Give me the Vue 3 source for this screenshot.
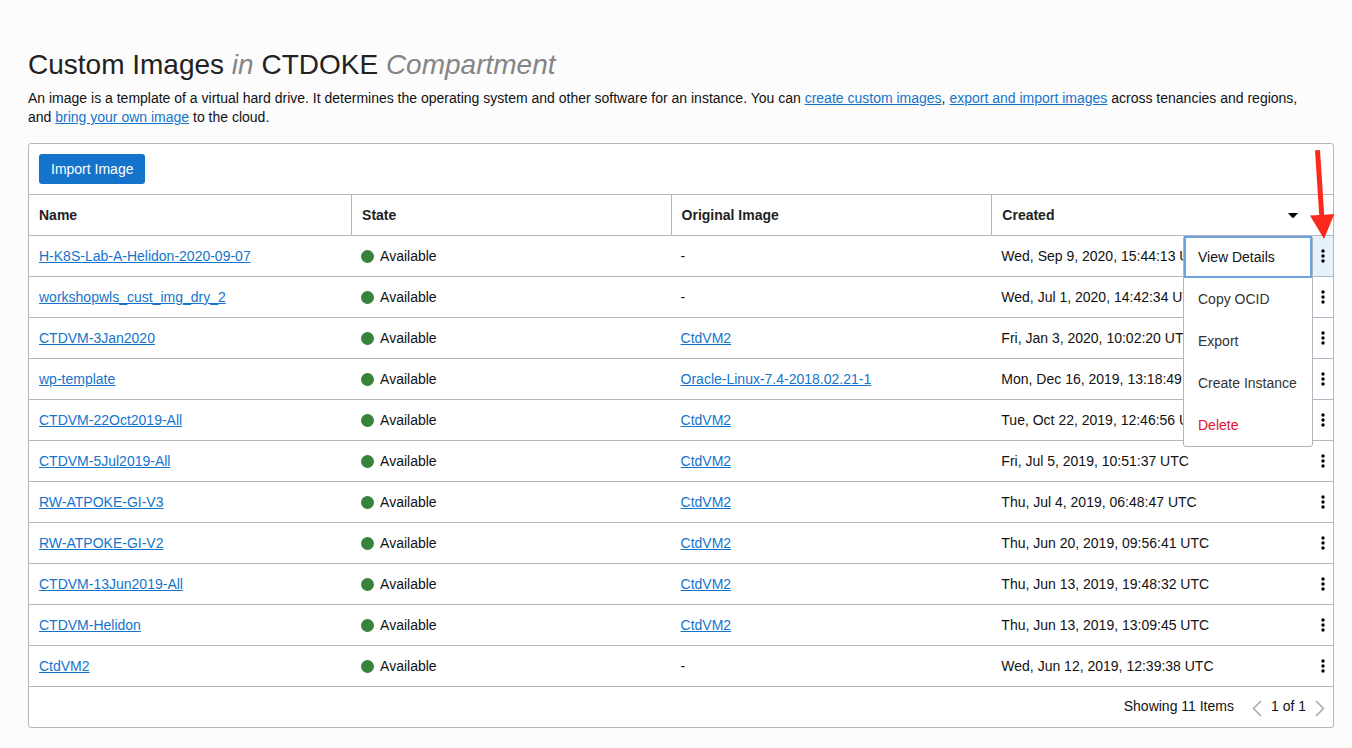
<script setup>
const images = [
  { name: 'H-K8S-Lab-A-Helidon-2020-09-07', original: '', created: 'Wed, Sep 9, 2020, 15:44:13 UTC' },
  { name: 'workshopwls_cust_img_dry_2', original: '', created: 'Wed, Jul 1, 2020, 14:42:34 UTC' },
  { name: 'CTDVM-3Jan2020', original: 'CtdVM2', created: 'Fri, Jan 3, 2020, 10:02:20 UTC' },
  { name: 'wp-template', original: 'Oracle-Linux-7.4-2018.02.21-1', created: 'Mon, Dec 16, 2019, 13:18:49 UTC' },
  { name: 'CTDVM-22Oct2019-All', original: 'CtdVM2', created: 'Tue, Oct 22, 2019, 12:46:56 UTC' },
  { name: 'CTDVM-5Jul2019-All', original: 'CtdVM2', created: 'Fri, Jul 5, 2019, 10:51:37 UTC' },
  { name: 'RW-ATPOKE-GI-V3', original: 'CtdVM2', created: 'Thu, Jul 4, 2019, 06:48:47 UTC' },
  { name: 'RW-ATPOKE-GI-V2', original: 'CtdVM2', created: 'Thu, Jun 20, 2019, 09:56:41 UTC' },
  { name: 'CTDVM-13Jun2019-All', original: 'CtdVM2', created: 'Thu, Jun 13, 2019, 19:48:32 UTC' },
  { name: 'CTDVM-Helidon', original: 'CtdVM2', created: 'Thu, Jun 13, 2019, 13:09:45 UTC' },
  { name: 'CtdVM2', original: '', created: 'Wed, Jun 12, 2019, 12:39:38 UTC' },
]
const actions = ['View Details', 'Copy OCID', 'Export', 'Create Instance', 'Delete']
const openRow = 0
</script>

<template>
  <main class="page">
    <h1 class="title">Custom Images <em>in</em> CTDOKE <em>Compartment</em></h1>
    <p class="intro">
      An image is a template of a virtual hard drive. It determines the operating system and other software for an
      instance. You can <a href="#">create custom images</a>, <a href="#">export and import images</a> across tenancies
      and regions, and <a href="#">bring your own image</a> to the cloud.
    </p>

    <section class="panel">
      <div class="toolbar">
        <button type="button" class="primary">Import Image</button>
      </div>

      <table class="table">
        <colgroup>
          <col class="col-name" />
          <col class="col-state" />
          <col class="col-original" />
          <col />
          <col class="col-actions" />
        </colgroup>
        <thead>
          <tr>
            <th scope="col">Name</th>
            <th scope="col">State</th>
            <th scope="col">Original Image</th>
            <th scope="col" colspan="2" aria-sort="descending">
              <button type="button" class="sort">
                Created
                <svg width="10" height="5" viewBox="0 0 10 5" aria-hidden="true"><path d="M0 0H10L6 4.4Q5 5 4 4.4Z" /></svg>
              </button>
            </th>
          </tr>
        </thead>
        <tbody>
          <tr v-for="(image, i) in images" :key="image.name">
            <td><a href="#">{{ image.name }}</a></td>
            <td><span class="state"><span class="dot"></span>Available</span></td>
            <td>
              <a v-if="image.original" href="#">{{ image.original }}</a>
              <template v-else>-</template>
            </td>
            <td>{{ image.created }}</td>
            <td class="actions" :class="{ open: i === openRow }">
              <button type="button" class="kebab" aria-label="Actions" aria-haspopup="menu">
                <svg width="5" height="14" viewBox="0 0 5 14" aria-hidden="true">
                  <circle cx="3" cy="2" r="1.7" />
                  <circle cx="3" cy="7" r="1.7" />
                  <circle cx="3" cy="12" r="1.7" />
                </svg>
              </button>
              <div v-if="i === openRow" class="menu" role="menu">
                <button
                  v-for="(action, n) in actions"
                  :key="action"
                  type="button"
                  role="menuitem"
                  class="item"
                  :class="{ focused: n === 0, danger: action === 'Delete' }"
                >{{ action }}</button>
              </div>
            </td>
          </tr>
        </tbody>
      </table>

      <footer class="footer">
        <span class="count">Showing 11 Items</span>
        <button type="button" class="pager" aria-label="Previous page">
          <svg width="10" height="17" viewBox="0 0 10 17" aria-hidden="true"><path d="M9 1L1.5 8.5L9 16" /></svg>
        </button>
        <span class="range">1 of 1</span>
        <button type="button" class="pager" aria-label="Next page">
          <svg width="10" height="17" viewBox="0 0 10 17" aria-hidden="true"><path d="M1 1L8.5 8.5L1 16" /></svg>
        </button>
      </footer>

      <svg class="pointer" width="26" height="92" viewBox="0 0 26 92" aria-hidden="true">
        <path d="M6 1.3L11 1L15.2 65.7L25.3 65L15 90L1 66.5L10.2 66Z" />
      </svg>
    </section>
  </main>
</template>

<style>
body {
  background: #fcfcfc;
}
</style>

<style scoped>
.page {
  padding: 47px 18px 20px 28px;
  font-family: "Liberation Sans", Arial, sans-serif;
  font-size: 14px;
  line-height: 19px;
  color: #111;
}
button {
  margin: 0;
  padding: 0;
  border: 0;
  background: none;
  font: inherit;
  color: inherit;
}
a {
  color: #1474cc;
  text-decoration: underline;
}
.title {
  margin: 0;
  font-size: 28px;
  line-height: 36px;
  font-weight: 400;
  color: #222;
}
.title em {
  color: #858585;
}
.intro {
  margin: 6px 0 16px;
  padding-right: 16px;
}
.panel {
  position: relative;
  border: 1px solid #b1b7c1;
  border-radius: 3px;
  background: #fff;
}
.toolbar {
  display: flex;
  padding: 10px;
  border-bottom: 1px solid #b1b7c1;
}
.primary {
  height: 30px;
  padding: 0 12px;
  border-radius: 3px;
  background: #1474cc;
  color: #fff;
}
.table {
  width: 100%;
  table-layout: fixed;
  border-collapse: separate;
  border-spacing: 0;
}
.col-name {
  width: 24.7%;
}
.col-state {
  width: 24.5%;
}
.col-original {
  width: 24.6%;
}
.col-actions {
  width: 20px;
}
th,
td {
  box-sizing: border-box;
  height: 41px;
  padding: 0 10px;
  border-bottom: 1px solid #b1b7c1;
  text-align: left;
  white-space: nowrap;
}
th {
  color: #222;
}
th + th {
  border-left: 1px solid #b1b7c1;
}
.sort {
  display: flex;
  align-items: center;
  justify-content: space-between;
  width: 100%;
  padding-right: 25px;
}
.state {
  display: flex;
  align-items: center;
  gap: 6px;
}
.dot {
  width: 13px;
  height: 13px;
  border-radius: 50%;
  background: #37833b;
}
.actions {
  position: relative;
  padding: 0;
}
.open {
  background: #e5f1fb;
}
.kebab {
  display: flex;
  align-items: center;
  justify-content: center;
  width: 100%;
  height: 40px;
}
.menu {
  position: absolute;
  z-index: 1;
  top: -1px;
  right: 100%;
  box-sizing: border-box;
  width: 130px;
  border: 1px solid #b1b7c1;
  border-radius: 3px;
  background: #fff;
}
.item {
  display: block;
  width: 100%;
  height: 42px;
  padding: 0 12px;
  border: 2px solid transparent;
  text-align: left;
  white-space: nowrap;
  color: #333;
}
.focused {
  border-color: #6ea3dc;
  color: #111;
}
.danger {
  color: #e0142f;
}
.footer {
  display: flex;
  align-items: center;
  justify-content: flex-end;
  box-sizing: border-box;
  height: 40px;
  padding: 0 8px 2px 0;
}
.count {
  margin-right: 18px;
}
.range {
  margin: 0 9px;
}
.pager {
  display: flex;
  padding-top: 4px;
}
.pager path {
  fill: none;
  stroke: #aaa;
  stroke-width: 1.6;
}
.pointer {
  position: absolute;
  z-index: 2;
  top: 5px;
  right: -2px;
  fill: #fc2a1c;
  pointer-events: none;
}
</style>
